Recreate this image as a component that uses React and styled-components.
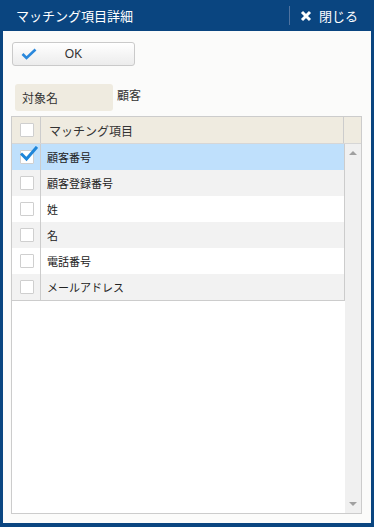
import React from "react";
import styled, { createGlobalStyle } from "styled-components";

const GlobalStyle = createGlobalStyle`
  html, body {
    margin: 0;
    padding: 0;
    background: #ffffff;
  }
  body {
    font-family: "Noto Sans CJK JP", "Noto Sans", "Liberation Sans", sans-serif;
  }
`

const Frame = styled.div`
  width: 374px;
  height: 527px;
  box-sizing: border-box;
  background: #0a4580;
  padding: 0 3px 4px 3px;
  display: flex;
  flex-direction: column;
`

const TitleBar = styled.div`
  height: 31px;
  display: flex;
  align-items: center;
  padding-left: 13px;
  color: #ffffff;
`

const Title = styled.div`
  flex: 1;
  font-size: 13px;
  line-height: 1;
  margin-top: -1px;
`

const CloseButton = styled.div`
  display: flex;
  align-items: center;
  height: 19px;
  border-left: 1px solid #4f73a0;
  padding: 0 13px 0 10px;
  font-size: 13px;
  line-height: 1;
  gap: 7px;
`

const Body = styled.div`
  flex: 1;
  background: #fbfbfa;
  display: flex;
  flex-direction: column;
  padding: 11px 0 9px 8px;
`

const OkButton = styled.button`
  margin-left: 1px;
  width: 123px;
  height: 24px;
  box-sizing: border-box;
  border: 1px solid #cacaca;
  border-radius: 3px;
  background: linear-gradient(#ffffff, #ececec);
  display: flex;
  align-items: center;
  padding: 0 0 0 8px;
  font-family: "Liberation Sans", sans-serif;
  font-size: 12px;
  color: #333;
  cursor: pointer;
`

const OkLabel = styled.span`
  flex: 1;
  text-align: center;
  padding-right: 24px;
`

const FieldRow = styled.div`
  display: flex;
  align-items: center;
  margin: 18px 0 0 4px;
  gap: 4px;
`

const FieldLabel = styled.div`
  width: 98px;
  height: 27px;
  box-sizing: border-box;
  background: #efebe0;
  border-radius: 3px;
  display: flex;
  align-items: center;
  padding-left: 7px;
  font-size: 12px;
  color: #333;
`

const FieldValue = styled.div`
  font-size: 12px;
  color: #333;
  margin-top: -7px;
`

const Table = styled.div`
  margin-top: 5px;
  width: 351px;
  flex: 1;
  box-sizing: border-box;
  border: 1px solid #cccccc;
  display: flex;
  flex-direction: column;
  background: #ffffff;
`

const HeadRow = styled.div`
  display: grid;
  grid-template-columns: 29px 1fr 17px;
  height: 26px;
  background: #efebe0;
  border-bottom: 1px solid #d6d6d6;
`

const CheckCell = styled.div`
  border-right: 1px solid #cccccc;
  display: flex;
  align-items: center;
  justify-content: center;
  position: relative;
  padding-left: 1px;
`

const HeadText = styled.div`
  display: flex;
  align-items: center;
  padding-left: 8px;
  font-size: 12px;
  color: #333;
  border-right: 1px solid #cccccc;
`

const BodyArea = styled.div`
  flex: 1;
  display: flex;
`

const RowList = styled.div`
  flex: 1;
  align-self: flex-start;
  border-bottom: 1px solid #cccccc;
  border-right: 1px solid #cccccc;
`

const Row = styled.div`
  display: grid;
  grid-template-columns: 29px 1fr;
  height: 26px;
  background: ${props => props.selected ? '#bfe0fc' : props.alt ? '#f2f2f2' : '#ffffff'};
`

const RowText = styled.div`
  display: flex;
  align-items: center;
  padding-left: 6px;
  font-size: 11px;
  color: #222;
`

const Box = styled.div`
  width: 14px;
  height: 14px;
  box-sizing: border-box;
  border: 1px solid #cfcfcf;
  background: #ffffff;
  border-radius: 1px;
`

const Tick = styled.svg`
  position: absolute;
  left: 8px;
  top: 2px;
`

const ScrollTrack = styled.div`
  width: 16px;
  background: #f0f0f0;
  display: flex;
  flex-direction: column;
  justify-content: space-between;
  align-items: center;
  padding: 7px 0 7px;
  margin-left: auto;
`

const Arrow = styled.div`
  width: 0;
  height: 0;
  border-left: 4px solid transparent;
  border-right: 4px solid transparent;
  ${props => props.down
    ? 'border-top: 4px solid #a0a0a0;'
    : 'border-bottom: 4px solid #a0a0a0;'}
`

const items = ['顧客番号', '顧客登録番号', '姓', '名', '電話番号', 'メールアドレス']

const Check = ({ checked }) => (
  <CheckCell>
    <Box />
    {checked ?
      <Tick width="18" height="16" viewBox="0 0 18 16">
        <path d="M2 8.5 L6.5 13 L16 2" fill="none" stroke="#1f86d9" strokeWidth="3" strokeLinecap="square" />
      </Tick> : null}
  </CheckCell>
)

const App = () => {
  return (
    <Frame>
      <GlobalStyle />
      <TitleBar>
        <Title>マッチング項目詳細</Title>
        <CloseButton>
          <svg width="12" height="12" viewBox="0 0 12 12">
            <path d="M2 2 L10 10 M10 2 L2 10" stroke="#ffffff" strokeWidth="3" />
          </svg>
          閉じる
        </CloseButton>
      </TitleBar>
      <Body>
        <OkButton>
          <svg width="16" height="12" viewBox="0 0 16 12">
            <path d="M1.5 6 L5.5 10 L14.5 1.5" fill="none" stroke="#2a88dc" strokeWidth="2.6" />
          </svg>
          <OkLabel>OK</OkLabel>
        </OkButton>
        <FieldRow>
          <FieldLabel>対象名</FieldLabel>
          <FieldValue>顧客</FieldValue>
        </FieldRow>
        <Table>
          <HeadRow>
            <Check />
            <HeadText>マッチング項目</HeadText>
            <div />
          </HeadRow>
          <BodyArea>
            <RowList>
              {items.map((name, i) => (
                <Row key={name} selected={i === 0} alt={i % 2 === 1}>
                  <Check checked={i === 0} />
                  <RowText>{name}</RowText>
                </Row>
              ))}
            </RowList>
            <ScrollTrack>
              <Arrow />
              <Arrow down />
            </ScrollTrack>
          </BodyArea>
        </Table>
      </Body>
    </Frame>
  )
}

export default App;
